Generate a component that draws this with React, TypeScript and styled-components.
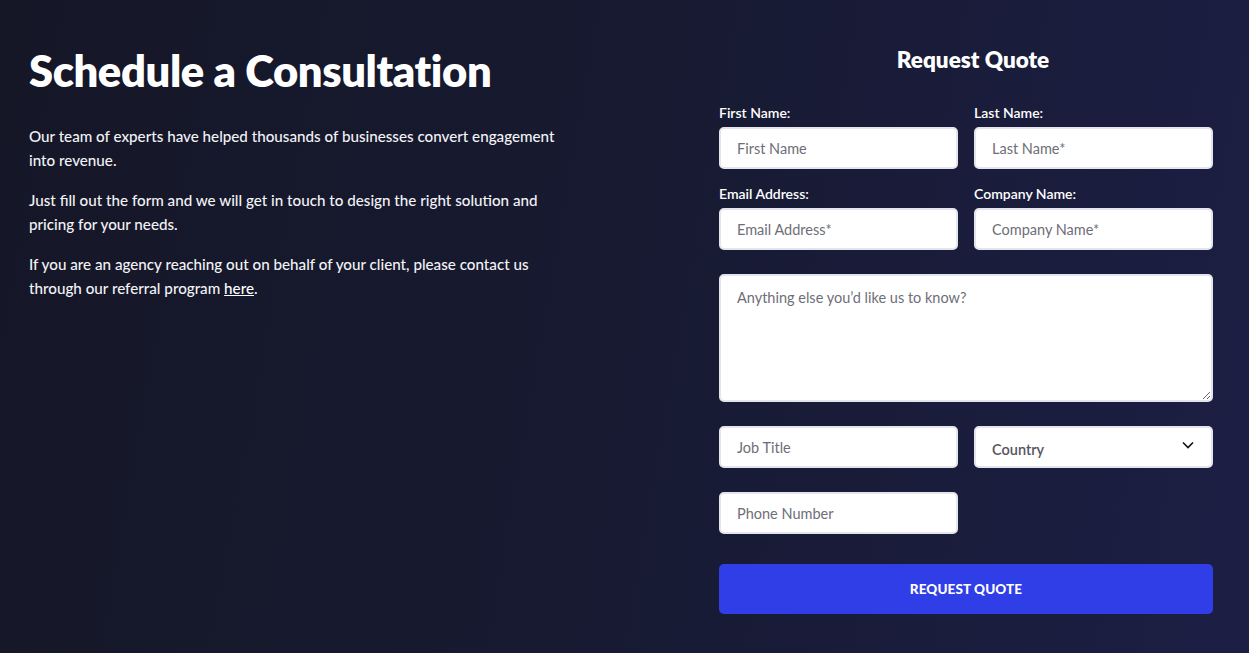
import React from "react";
import styled, { createGlobalStyle } from "styled-components";

const Global = createGlobalStyle`
  html, body { margin: 0; padding: 0; }
  body {
    font-family: Lato, "Liberation Sans", sans-serif;
    background: #16182b;
  }
  * { box-sizing: border-box; }
`;

const Page = styled.main`
  width: 1249px;
  height: 653px;
  background: linear-gradient(100deg, #151727 0%, #171a30 45%, #1c1e44 100%);
  display: grid;
  grid-template-columns: 1fr 494px;
  column-gap: 40px;
  padding: 44px 36px 0 29px;
  overflow: hidden;
`;

const Intro = styled.section`
  display: flex;
  flex-direction: column;
  max-width: 535px;
`;

const Heading = styled.h1`
  margin: 0 0 28px;
  color: #ffffff;
  font-size: 43.5px;
  line-height: 52px;
  font-weight: 800;
  letter-spacing: -0.4px;
`;

const Para = styled.p`
  margin: 0 0 16px;
  color: #f2f2f6;
  font-size: 15.2px;
  line-height: 24px;
  font-weight: 500;
`;

const Link = styled.a`
  color: #ffffff;
  text-decoration: underline;
`;

const Form = styled.form`
  display: flex;
  flex-direction: column;
`;

const FormTitle = styled.h2`
  margin: 0 0 28px;
  padding-left: 14px;
  text-align: center;
  color: #ffffff;
  font-size: 22.5px;
  line-height: 32px;
  font-weight: 800;
`;

const Row = styled.div<{ $mt?: number }>`
  display: grid;
  grid-template-columns: 1fr 1fr;
  column-gap: 16px;
  margin-top: ${(p) => p.$mt ?? 0}px;
`;

const Field = styled.label`
  display: flex;
  flex-direction: column;
`;

const Label = styled.span`
  color: #ffffff;
  font-size: 14px;
  line-height: 18px;
  font-weight: 600;
  margin-bottom: 5px;
`;

const Input = styled.input`
  height: 42px;
  width: 100%;
  border: 2px solid #e4e4ec;
  border-radius: 5px;
  background: #ffffff;
  padding: 0 16px;
  font-family: inherit;
  font-size: 14.5px;
  color: #333;
  outline: none;
  &::placeholder { color: #6e6e78; }
`;

const TextArea = styled.textarea`
  display: block;
  width: 100%;
  height: 128px;
  margin-top: 24px;
  border: 2px solid #e4e4ec;
  border-radius: 5px;
  background: #ffffff;
  padding: 12px 16px;
  font-family: inherit;
  font-size: 14.5px;
  line-height: 20px;
  outline: none;
  resize: vertical;
  &::placeholder { color: #6e6e78; }
`;

const SelectWrap = styled.div`
  position: relative;
  height: 42px;
`;

const Select = styled.select`
  appearance: none;
  width: 100%;
  height: 42px;
  border: 2px solid #e4e4ec;
  border-radius: 5px;
  background: #ffffff;
  padding: 4px 16px 0;
  font-family: inherit;
  font-size: 14.5px;
  font-weight: 600;
  color: #555560;
  outline: none;
`;

const Chevron = styled.svg`
  position: absolute;
  right: 19px;
  top: 15px;
  pointer-events: none;
`;

const Button = styled.button`
  margin-top: 30px;
  height: 50px;
  width: 100%;
  border: none;
  border-radius: 5px;
  background: #2f3ee6;
  color: #ffffff;
  font-family: inherit;
  font-size: 13.5px;
  font-weight: 900;
  letter-spacing: 0.1px;
  cursor: pointer;
`;

export default function App() {
  return (
    <>
      <Global />
      <Page>
        <Intro>
          <Heading>Schedule a Consultation</Heading>
          <Para>
            Our team of experts have helped thousands of businesses convert engagement into revenue.
          </Para>
          <Para>
            Just fill out the form and we will get in touch to design the right solution and pricing for your needs.
          </Para>
          <Para>
            If you are an agency reaching out on behalf of your client, please contact us through our referral
            program <Link href="#">here</Link>.
          </Para>
        </Intro>
        <Form onSubmit={(e) => e.preventDefault()}>
          <FormTitle>Request Quote</FormTitle>
          <Row>
            <Field>
              <Label>First Name:</Label>
              <Input placeholder="First Name" />
            </Field>
            <Field>
              <Label>Last Name:</Label>
              <Input placeholder="Last Name*" />
            </Field>
          </Row>
          <Row $mt={16}>
            <Field>
              <Label>Email Address:</Label>
              <Input placeholder="Email Address*" />
            </Field>
            <Field>
              <Label>Company Name:</Label>
              <Input placeholder="Company Name*" />
            </Field>
          </Row>
          <TextArea placeholder="Anything else you’d like us to know?" />
          <Row $mt={24}>
            <Input placeholder="Job Title" />
            <SelectWrap>
              <Select defaultValue="">
                <option value="">Country</option>
              </Select>
              <Chevron width="12" height="8" viewBox="0 0 12 8">
                <path d="M1 1.5 L6 6.5 L11 1.5" fill="none" stroke="#111" strokeWidth="1.6" />
              </Chevron>
            </SelectWrap>
          </Row>
          <Row $mt={24}>
            <Input placeholder="Phone Number" />
          </Row>
          <Button type="submit">REQUEST QUOTE</Button>
        </Form>
      </Page>
    </>
  );
}
